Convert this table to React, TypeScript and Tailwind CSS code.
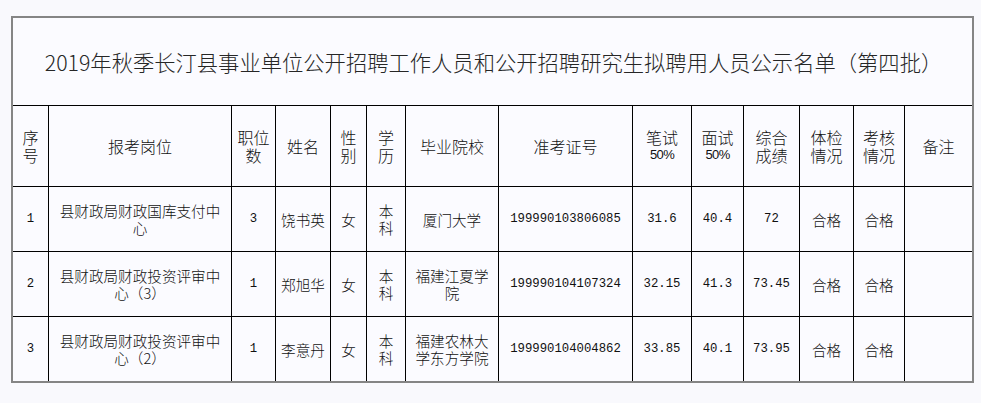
import React from "react";

const cjk = { fontFamily: '"Noto Sans CJK SC", "Noto Sans", sans-serif' };
const mono = { fontFamily: '"Liberation Mono", "DejaVu Sans Mono", monospace' };

type CellProps = {
  lines: string[];
  col: number;
  last: boolean;
  kind?: "h" | "t" | "n";
};

function Cell({ lines, col, last, kind = "t" }: CellProps) {
  const cls =
    "flex flex-col items-center justify-center text-center whitespace-nowrap text-[#111] border-black " +
    (col < 13 ? "border-r " : "") +
    (last ? "" : "border-b ") +
    (kind === "h"
      ? "text-[16px] leading-[18px] font-light"
      : kind === "n"
      ? "text-[12.3px] leading-[17px]"
      : "text-[14.6px] leading-[17px] font-light");
  return (
    <div className={cls} style={kind === "n" ? mono : cjk}>
      {lines.map((l, i) => (
        <div key={i}>{l}</div>
      ))}
    </div>
  );
}

function Pct({ t }: { t: string }) {
  return (
    <div className="flex flex-col items-center justify-center text-center whitespace-nowrap text-[#111] border-black border-r border-b">
      <div className="text-[16px] leading-[18px] font-light" style={cjk}>
        {t}
      </div>
      <div
        className="text-[13px] leading-[18px] tracking-[-0.6px]"
        style={{ fontFamily: '"Liberation Sans", Arial, sans-serif' }}
      >
        50%
      </div>
    </div>
  );
}

const rows = [
  {
    no: "1",
    post: ["县财政局财政国库支付中", "心"],
    num: "3",
    name: "饶书英",
    school: ["厦门大学"],
    id: "199990103806085",
    w: "31.6",
    m: "40.4",
    t: "72",
  },
  {
    no: "2",
    post: ["县财政局财政投资评审中", "心（3）"],
    num: "1",
    name: "郑旭华",
    school: ["福建江夏学", "院"],
    id: "199990104107324",
    w: "32.15",
    m: "41.3",
    t: "73.45",
  },
  {
    no: "3",
    post: ["县财政局财政投资评审中", "心（2）"],
    num: "1",
    name: "李意丹",
    school: ["福建农林大", "学东方学院"],
    id: "199990104004862",
    w: "33.85",
    m: "40.1",
    t: "73.95",
  },
];

export default function App() {
  return (
    <div className="w-[981px] h-[403px] bg-[#f9f9fd] pt-[16px] pl-[11px]">
      <div className="w-[963px] border-2 border-[#858585] bg-[#fbfbff]">
        <div className="h-[88px] border-b border-black flex items-center justify-center pl-[2px]">
          <div className="text-[21.3px] leading-[24px] text-[#262626] font-light" style={cjk}>
            2019年秋季长汀县事业单位公开招聘工作人员和公开招聘研究生拟聘用人员公示名单（第四批）
          </div>
        </div>
        <div className="grid grid-cols-[36px_183px_44px_55px_36px_39px_93px_134px_59px_52px_56px_54px_51px_67px] grid-rows-[81px_65px_65px_64px]">
          <Cell kind="h" col={0} last={false} lines={["序", "号"]} />
          <Cell kind="h" col={1} last={false} lines={["报考岗位"]} />
          <Cell kind="h" col={2} last={false} lines={["职位", "数"]} />
          <Cell kind="h" col={3} last={false} lines={["姓名"]} />
          <Cell kind="h" col={4} last={false} lines={["性", "别"]} />
          <Cell kind="h" col={5} last={false} lines={["学", "历"]} />
          <Cell kind="h" col={6} last={false} lines={["毕业院校"]} />
          <Cell kind="h" col={7} last={false} lines={["准考证号"]} />
          <Pct t="笔试" />
          <Pct t="面试" />
          <Cell kind="h" col={10} last={false} lines={["综合", "成绩"]} />
          <Cell kind="h" col={11} last={false} lines={["体检", "情况"]} />
          <Cell kind="h" col={12} last={false} lines={["考核", "情况"]} />
          <Cell kind="h" col={13} last={false} lines={["备注"]} />
          {rows.map((r, i) => {
            const last = i === rows.length - 1;
            return (
              <React.Fragment key={r.no}>
                <Cell kind="n" col={0} last={last} lines={[r.no]} />
                <Cell col={1} last={last} lines={r.post} />
                <Cell kind="n" col={2} last={last} lines={[r.num]} />
                <Cell col={3} last={last} lines={[r.name]} />
                <Cell col={4} last={last} lines={["女"]} />
                <Cell col={5} last={last} lines={["本", "科"]} />
                <Cell col={6} last={last} lines={r.school} />
                <Cell kind="n" col={7} last={last} lines={[r.id]} />
                <Cell kind="n" col={8} last={last} lines={[r.w]} />
                <Cell kind="n" col={9} last={last} lines={[r.m]} />
                <Cell kind="n" col={10} last={last} lines={[r.t]} />
                <Cell col={11} last={last} lines={["合格"]} />
                <Cell col={12} last={last} lines={["合格"]} />
                <Cell col={13} last={last} lines={[""]} />
              </React.Fragment>
            );
          })}
        </div>
      </div>
    </div>
  );
}
